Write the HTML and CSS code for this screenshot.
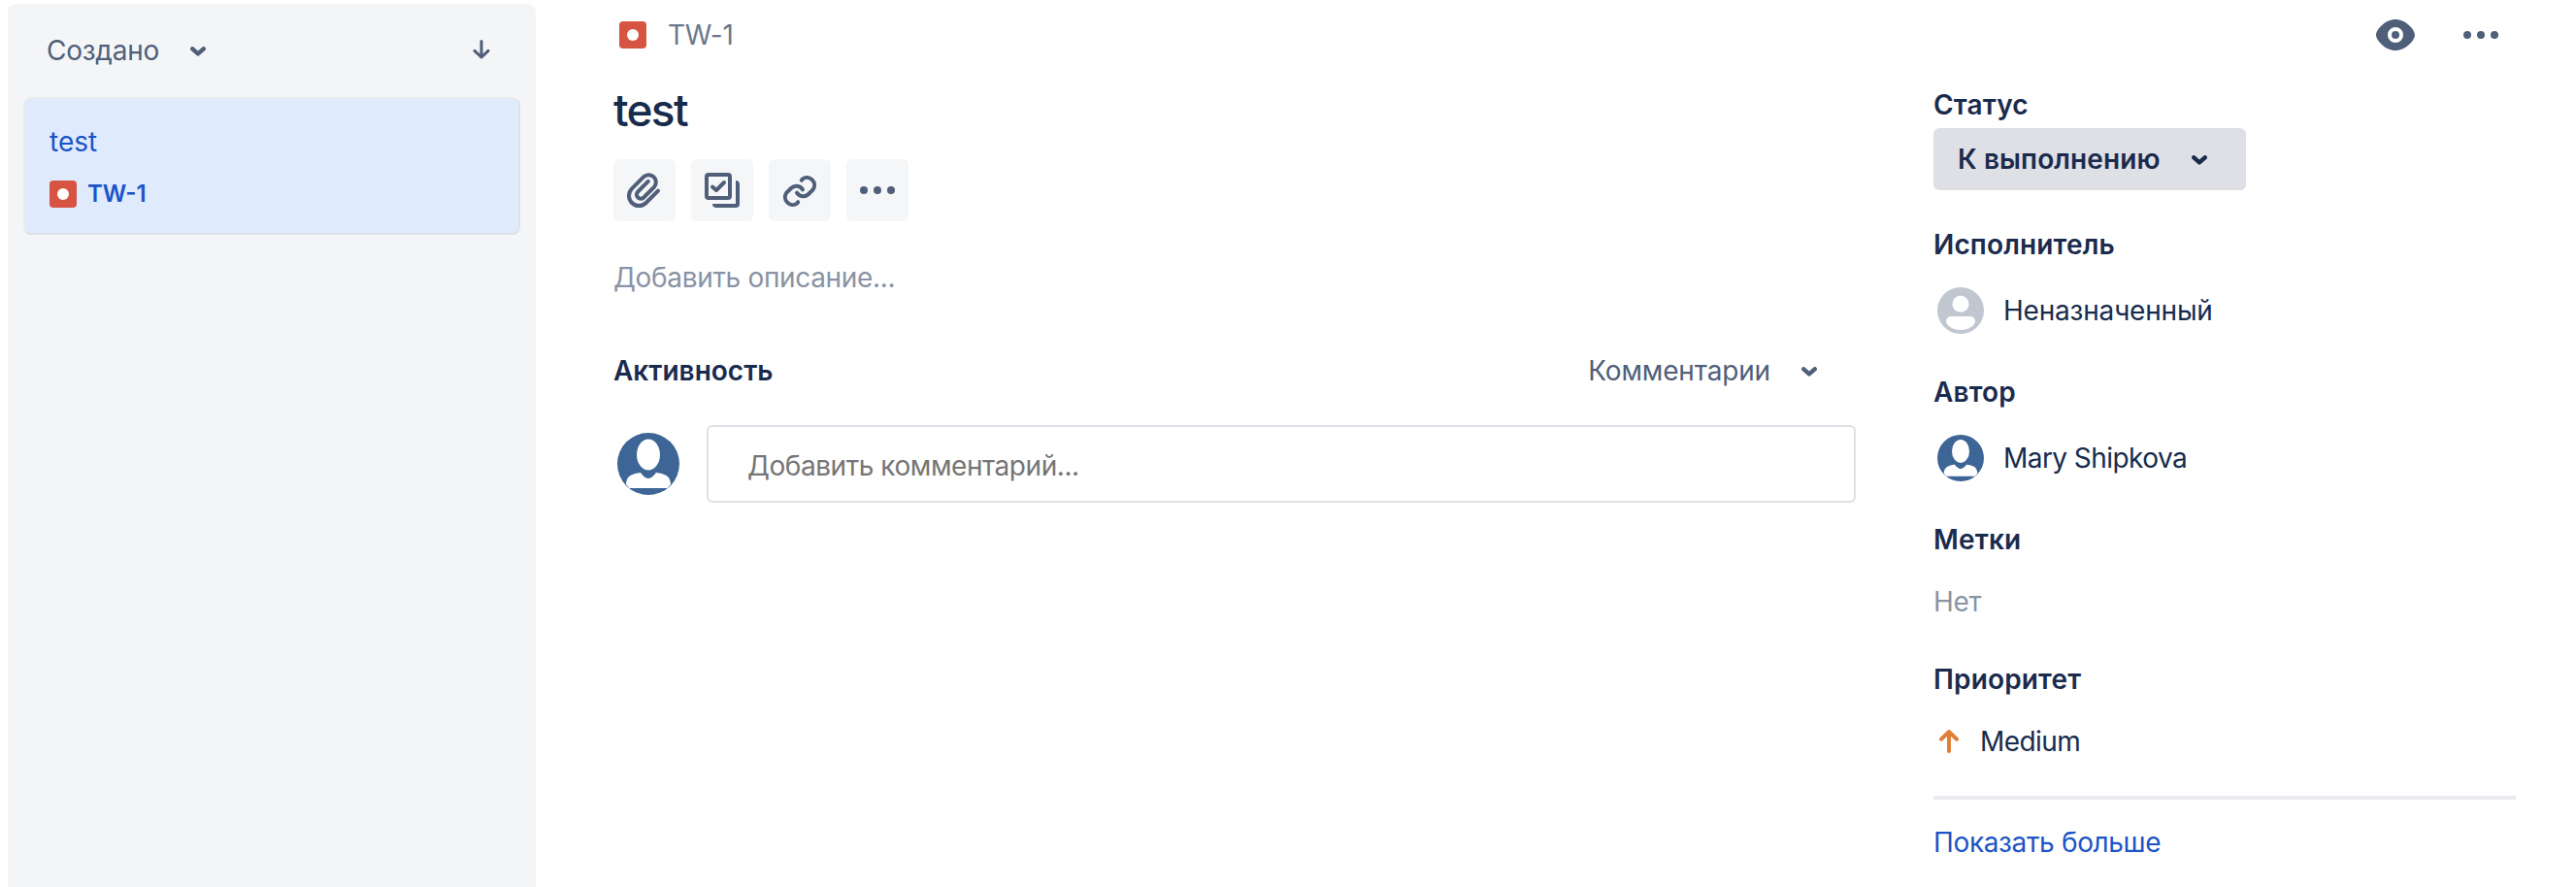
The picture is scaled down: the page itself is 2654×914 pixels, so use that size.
FILE: index.html
```html
<!DOCTYPE html>
<html lang="ru">
<head>
<meta charset="utf-8">
<title>TW-1 test</title>
<link rel="stylesheet" href="styles.css">
</head>
<body>
<div class="app">
  <aside class="sidebar">
    <header class="sort">
      <button class="sort-by"><span class="t-created">Создано</span>
        <svg class="chevron" viewBox="0 0 16 10"><path d="M2.3 2.3 8 7.4l5.7-5.1"/></svg></button>
      <svg class="sort-dir" viewBox="0 0 18 20"><path d="M9 1.5V18M2 11.3l7 6.7 7-6.7"/></svg>
    </header>
    <a class="card">
      <span class="card-title">test</span>
      <span class="card-key"><svg class="bug" viewBox="0 0 28 28"><rect width="28" height="28" rx="4"/><circle cx="14" cy="14" r="6"/></svg><span>TW-1</span></span>
    </a>
  </aside>

  <main class="issue">
    <header class="topbar">
      <div class="crumb"><svg class="bug" viewBox="0 0 28 28"><rect width="28" height="28" rx="4"/><circle cx="14" cy="14" r="6"/></svg><span>TW-1</span></div>
      <div class="top-actions">
        <svg class="eye" viewBox="0 0 40 32"><path fill-rule="evenodd" d="M20 0C9.500 0 0 10.500 0 16s9.500 16 20 16 20-10.500 20-16S30.500 0 20 0zm0 24a8 8 0 1 1 0-16 8 8 0 0 1 0 16z"/><circle cx="20" cy="16" r="4"/></svg>
        <svg class="dots" viewBox="0 0 36 8"><circle cx="4" cy="4" r="4"/><circle cx="18" cy="4" r="4"/><circle cx="32" cy="4" r="4"/></svg>
      </div>
    </header>

    <div class="columns">
      <section class="content">
        <h1>test</h1>
        <div class="tools">
          <button class="tool"><svg viewBox="0 0 64 64"><path d="M46 32.600 33.600 45A10.300 10.300 0 0 1 19 30.400L31.200 18.200A7.500 7.500 0 0 1 41.800 28.800L31.200 39.500A4.200 4.200 0 0 1 25.200 33.500L35.800 22.900"/></svg></button>
          <button class="tool"><svg viewBox="0 0 64 64"><rect x="16" y="16" width="24" height="24" rx="2"/><path d="m22 28.500 4 3.500 8-8"/><path class="solid" d="M46 22a4 4 0 0 1 4 4v20a4 4 0 0 1-4 4H26a4 4 0 0 1-4-4h24z"/></svg></button>
          <button class="tool"><svg viewBox="0 0 64 64"><path d="M33.800 21.800 34.900 20.400A7.800 7.800 0 0 1 45.700 31.300L41 36A7.800 7.800 0 0 1 29 34.700M30.200 44.200 29.100 45.600A7.800 7.800 0 0 1 18.300 34.700L23 30A7.800 7.800 0 0 1 35 31.300"/></svg></button>
          <button class="tool"><svg viewBox="0 0 64 64" class="fill"><circle cx="18" cy="32" r="4"/><circle cx="32" cy="32" r="4"/><circle cx="46" cy="32" r="4"/></svg></button>
        </div>
        <p class="description">Добавить описание...</p>
        <div class="activity">
          <h2>Активность</h2>
          <button class="filter"><span class="filter-name">Комментарии</span>
            <svg class="chevron" viewBox="0 0 16 10"><path d="M2.300 2.300 8 7.400l5.700-5.100"/></svg></button>
        </div>
        <div class="comment">
          <svg class="avatar" viewBox="0 0 64 64"><circle class="blue" cx="32" cy="32" r="32"/><ellipse cx="32" cy="22.500" rx="12" ry="16"/><path d="M24 41c2 3 5.500 6 8 6s6-3 8-6c8 1 15 3 15 12.300L51.500 57h-39L9 53.300C9 44 16 42 24 41z"/></svg>
          <div class="comment-box">Добавить комментарий...</div>
        </div>
      </section>

      <aside class="details">
        <h3>Статус</h3>
        <button class="status"><span>К выполнению</span>
          <svg class="chevron" viewBox="0 0 16 10"><path d="M2.300 2.300 8 7.400l5.700-5.100"/></svg></button>
        <h3>Исполнитель</h3>
        <div class="person">
          <svg class="avatar" viewBox="0 0 48 48"><circle class="grey" cx="24" cy="24" r="24"/><circle cx="24" cy="17.300" r="8.500"/><path d="M14 30h20a5 5 0 0 1 5 5c0 4-6.500 9-15 9S9 39 9 35a5 5 0 0 1 5-5z"/></svg>
          <span class="unassigned">Неназначенный</span>
        </div>
        <h3>Автор</h3>
        <div class="person">
          <svg class="avatar" viewBox="0 0 64 64"><circle class="blue" cx="32" cy="32" r="32"/><ellipse cx="32" cy="22.500" rx="12" ry="16"/><path d="M24 41c2 3 5.500 6 8 6s6-3 8-6c8 1 15 3 15 12.300L51.500 57h-39L9 53.300C9 44 16 42 24 41z"/></svg>
          <span class="latin">Mary Shipkova</span>
        </div>
        <h3>Метки</h3>
        <p class="none">Нет</p>
        <h3>Приоритет</h3>
        <div class="priority">
          <svg viewBox="0 0 20 24"><path d="M10 22V3M2 9.700 10 2l8 7.700"/></svg><span class="latin">Medium</span>
        </div>
        <hr>
        <a class="more">Показать больше</a>
      </aside>
    </div>
  </main>
</div>
</body>
</html>
```
FILE: styles.css
```css
* { box-sizing: border-box; }
body { margin: 0; background: #fff; color: #172b4d; font: 28px/40px Inter, "Noto Sans", sans-serif; }
h1, h2, h3, p { margin: 0; font-size: 28px; line-height: 40px; }
h2, h3 { font-weight: 600; color: #1b2b4d; }
h3 { letter-spacing: 0.15px; }
button { border: 0; margin: 0; padding: 0; background: none; font: inherit; color: inherit; display: flex; align-items: center; }
svg { display: block; flex: none; }
.app { display: flex; height: 914px; overflow: hidden; padding: 4px 0 0 8px; }

.sidebar { width: 544px; background: #f4f5f7; border-radius: 8px 8px 0 0; padding: 0 16px; }
.sort { height: 96px; display: flex; justify-content: space-between; align-items: center; padding: 0 31px 0 24px; color: #505f79; }
.sort-by { gap: 32px; letter-spacing: -0.24px; }
.chevron { width: 16px; height: 10px; margin-top: 1px; fill: none; stroke: currentColor; stroke-width: 4.4; stroke-linecap: round; stroke-linejoin: round; }
.sort-dir { width: 18px; height: 20px; margin-top: -3px; fill: none; stroke: currentColor; stroke-width: 3; stroke-linecap: round; stroke-linejoin: round; }
.card { display: flex; flex-direction: column; gap: 14px; height: 142px; padding: 24px 25px; background: #dfeafd; border: 2px solid #dfe1e8; border-top-color: #e9ebef; border-left-color: #e9ebef; border-radius: 8px; color: #1a54c6; }
.card-key { display: flex; align-items: center; gap: 11px; font-size: 24px; font-weight: 600; }
.bug { width: 28px; height: 28px; fill: #d75443; }
.bug circle { fill: #fff; }

.issue { flex: 1; margin-top: -4px; padding: 0 62px 0 80px; }
.topbar { height: 72px; display: flex; justify-content: space-between; align-items: center; padding: 0 18px 0 6px; color: #6b778c; }
.crumb { display: flex; align-items: center; gap: 22px; letter-spacing: -0.2px; }
.top-actions { display: flex; align-items: center; gap: 50px; fill: #505f79; }
.eye { width: 40px; height: 32px; }
.dots { width: 36px; height: 8px; }

.columns { display: flex; gap: 80px; }
.content { width: 1280px; padding-top: 13px; }
h1 { font-size: 46px; line-height: 56px; font-weight: 550; letter-spacing: -1.7px; }
.tools { display: flex; gap: 16px; margin-top: 23px; }
.tool { width: 64px; height: 64px; background: #f5f6f8; border-radius: 6px; }
.tool svg { width: 64px; height: 64px; fill: none; stroke: #505f79; stroke-width: 4; stroke-linecap: round; stroke-linejoin: round; }
.tool .fill, .tool .solid { fill: #505f79; stroke: none; }
.description { margin-top: 38px; color: #8993a4; letter-spacing: -0.33px; }
.activity { display: flex; justify-content: space-between; margin-top: 56px; padding-right: 40px; }
.filter { gap: 32px; color: #505f79; }
.filter-name { letter-spacing: -0.16px; }
.comment { display: flex; align-items: center; gap: 28px; margin-top: 36px; padding-left: 4px; }
.avatar { width: 64px; height: 64px; fill: #fff; }
.blue { fill: #3d6595; }
.grey { fill: #c1c7d0; }
.comment-box { flex: 1; height: 80px; padding: 20px 40px 16px; border: 2px solid #dfe0e6; border-radius: 6px; color: #757575; letter-spacing: -0.45px; }

.details { width: 600px; padding-top: 16px; }
.status { width: 322px; height: 64px; margin: 4px 0 36px; padding: 0 40px 0 25px; justify-content: space-between; background: #dfe0e6; border-radius: 6px; font-weight: 600; color: #1b2b4d; letter-spacing: 0.1px; }
.person { display: flex; align-items: center; gap: 20px; margin: 24px 0 40px; padding-left: 4px; }
.person .avatar { width: 48px; height: 48px; }
.person, .priority { color: #172b4d; }
.unassigned { letter-spacing: -0.2px; }
.latin { letter-spacing: -0.55px; }
.none { margin: 24px 0 40px; color: #8993a4; letter-spacing: -0.3px; }
.priority { display: flex; align-items: center; gap: 22px; margin: 24px 0 36px; padding-left: 6px; }
.priority svg { width: 20px; height: 24px; fill: none; stroke: #e07f37; stroke-width: 4; stroke-linecap: round; stroke-linejoin: round; }
hr { height: 4px; margin: 0 0 24px; border: 0; background: #ebecf0; }
.more { color: #1a54c6; letter-spacing: -0.35px; }
```
